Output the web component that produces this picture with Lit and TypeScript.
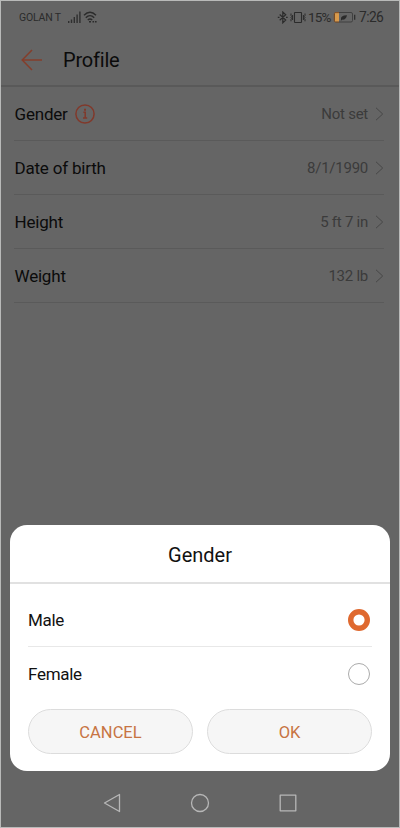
import { LitElement, html, svg, css } from "lit";
import { customElement, property, state } from "lit/decorators.js";

@customElement("status-bar")
class StatusBar extends LitElement {
  static styles = css`
    :host {
      display: flex;
      align-items: center;
      height: 31px;
      box-sizing: border-box;
      padding: 1px 15px 0 18px;
      color: #2b2b2b;
    }
    svg { display: block; flex: none; }
    .carrier { font-size: 10.5px; letter-spacing: -0.2px; width: 49px; white-space: nowrap; }
    .wifi { margin-left: 2px; }
    .right { display: flex; align-items: center; margin-left: auto; }
    .vibrate { margin-left: 1px; }
    .percent { font-size: 13.5px; width: 24px; margin-left: 1px; white-space: nowrap; letter-spacing: -0.8px; }
    .battery { margin-left: 1px; }
    .time { width: 25px; margin-left: 3px; font-size: 13.8px; letter-spacing: -0.6px; white-space: nowrap; }
  `;
  render() {
    return html`
      <span class="carrier">GOLAN T</span>
      <svg width="13" height="12" viewBox="0 0 13 12" fill="#2f2f2f">
        <path d="M0 10h1.4v2H0zM2.8 8.5h1.4V12H2.8zM5.6 6h1.4v6H5.6zM8.4 3.5h1.4V12H8.4zM11.2 .5h1.4V12h-1.4z" />
      </svg>
      <svg class="wifi" width="15" height="12" viewBox="0 0 15 12" fill="none" stroke="#2b2b2b" stroke-width="1.4">
        <path d="M1 4.3Q7 -1.8 13 4.3M2.8 6.8Q7 2.4 11.2 6.8M4.8 9Q7 6.8 9.2 9" />
        <path d="M6 10.8h2M9.5 10.8h1.6M12 10.8h1.6" stroke-width="1.5" />
      </svg>
      <div class="right">
        <svg width="12" height="13" viewBox="0 0 12 13" fill="none" stroke="#2b2b2b" stroke-width="1.2">
          <path d="M2.7 3.5L8.7 9L5.8 11.8V1L8.7 3.8L2.7 9.2M0.8 6.3h1.7M9 6.3h1.7" />
        </svg>
        <svg class="vibrate" width="17" height="13" viewBox="0 0 17 13" fill="none" stroke="#2b2b2b" stroke-width="1.1">
          <rect x="4.5" y="1.5" width="7" height="10" rx="0.5" />
          <path d="M2.6 4v5M1 2.5v2l.7 1-.7 1 .7 1-.7 1v1.8M13.4 4v5M15 2.5v2l-.7 1 .7 1-.7 1 .7 1v1.8" stroke-width="1" />
        </svg>
        <span class="percent">15%</span>
        <svg class="battery" width="23" height="13" viewBox="0 0 23 13" fill="none">
          <rect x="1.5" y="1.5" width="18" height="9.5" rx="1.5" stroke="#404040" />
          <path d="M6 1.5H3Q1.2 1.5 1.2 3.5v5.7Q1.2 11 3 11h3" stroke="#8b5424" />
          <rect x="2" y="2.2" width="4" height="8.2" fill="#d99a4b" />
          <path d="M8 8.8Q7 4.2 14 4.2Q13 9 9.2 8.6L7.8 10z" fill="#2b2b2b" />
          <path d="M21.7 3.8v5" stroke="#2b2b2b" stroke-width="1.2" />
        </svg>
        <span class="time">7:26</span>
      </div>
    `;
  }
}

@customElement("profile-row")
class ProfileRow extends LitElement {
  @property() label = "";
  @property() value = "";
  @property({ type: Boolean }) info = false;
  static styles = css`
    :host {
      display: flex;
      align-items: center;
      box-sizing: border-box;
      height: 54px;
      margin: 0 15px 0 13px;
      padding-left: 0.5px;
      border-bottom: 1px solid #5a5a5a;
    }
    .label { font-size: 17px; color: #0b0b0b; letter-spacing: -0.2px; padding-top: 1px; }
    .value { margin-left: auto; font-size: 15px; letter-spacing: -0.25px; color: #3b3b3b; padding-top: 1px; }
    svg { display: block; flex: none; }
    .info { margin-left: 7.5px; }
    .chevron { margin-left: 7px; }
  `;
  render() {
    return html`
      <span class="label">${this.label}</span>
      ${this.info
        ? html`<svg class="info" width="20" height="20" viewBox="0 0 20 20" fill="none" stroke="#81392b">
            <circle cx="10" cy="10" r="9.1" stroke-width="1.5" />
            <path d="M8.4 8.3h1.8v5.4M8 14h4.2" stroke-width="1.5" />
            <path d="M10 4.8v2" stroke-width="2" />
          </svg>`
        : null}
      <span class="value">${this.value}</span>
      <svg class="chevron" width="9" height="14" viewBox="0 0 9 14" fill="none" stroke="#474747">
        <path d="M1 .8L7.7 7L1 13.2" />
      </svg>
    `;
  }
}

@customElement("gender-dialog")
class GenderDialog extends LitElement {
  @state() selected = "Male";
  static styles = css`
    :host {
      display: block;
      box-sizing: border-box;
      height: 246px;
      border-radius: 17px;
      overflow: hidden;
      background: #fff;
      color: #111;
    }
    .title {
      display: flex;
      align-items: center;
      justify-content: center;
      box-sizing: border-box;
      height: 59px;
      padding-top: 2px;
      border-bottom: 2px solid #e1e1e1;
      font-size: 20px;
    }
    .options { padding: 9px 18px 0; }
    .option {
      display: flex;
      align-items: center;
      justify-content: space-between;
      box-sizing: border-box;
      height: 54px;
      padding-right: 2px;
      font-size: 17px;
      letter-spacing: -0.3px;
    }
    .option:first-child { border-bottom: 1px solid #e8e8e8; }
    svg { display: block; }
    .actions { display: flex; gap: 14px; padding: 8px 18px 0; }
    button {
      flex: 1;
      height: 45px;
      box-sizing: border-box;
      padding: 1px 0 0;
      border: 1px solid #dcdcdc;
      border-radius: 23px;
      background: #f6f6f6;
      color: #c77443;
      font: 16.5px Roboto, sans-serif;
    }
  `;
  render() {
    return html`
      <div class="title">Gender</div>
      <div class="options">
        ${["Male", "Female"].map(
          (name) => html`<div class="option" @click=${() => (this.selected = name)}>
            <span>${name}</span>
            <svg width="22" height="22" viewBox="0 0 22 22" fill="none">
              ${this.selected === name
                ? svg`<circle cx="11" cy="11" r="8.3" stroke="#df692f" stroke-width="5.4" />`
                : svg`<circle cx="11" cy="11" r="10.5" stroke="#aaa" />`}
            </svg>
          </div>`
        )}
      </div>
      <div class="actions"><button>CANCEL</button><button>OK</button></div>
    `;
  }
}

@customElement("app-root")
class AppRoot extends LitElement {
  static styles = css`
    :host {
      display: flex;
      flex-direction: column;
      box-sizing: border-box;
      height: 828px;
      border: 1px solid #b9bab9;
      background: #656565;
      font-family: Roboto, sans-serif;
    }
    header {
      display: flex;
      align-items: center;
      box-sizing: border-box;
      height: 55px;
      padding: 2px 20px 0;
      border-bottom: 2px solid #595959;
      color: #0b0b0b;
      font-size: 20px;
      letter-spacing: -0.2px;
    }
    header svg { display: block; margin-right: 20px; }
    .sheet { margin: auto 9px 0; }
    nav {
      display: flex;
      justify-content: center;
      align-items: center;
      gap: 68.3px;
      box-sizing: border-box;
      height: 56px;
      padding-top: 8px;
    }
    nav svg { display: block; }
  `;
  render() {
    return html`
      <status-bar></status-bar>
      <header>
        <svg width="22" height="22" viewBox="0 0 22 22" fill="none" stroke="#843e2b" stroke-width="1.5">
          <path d="M21 11H1.5M11 1L1.2 11L11 21" />
        </svg>
        <span>Profile</span>
      </header>
      <profile-row label="Gender" value="Not set" info></profile-row>
      <profile-row label="Date of birth" value="8/1/1990"></profile-row>
      <profile-row label="Height" value="5 ft 7 in"></profile-row>
      <profile-row label="Weight" value="132 lb"></profile-row>
      <gender-dialog class="sheet"></gender-dialog>
      <nav>
        ${[
          svg`<path d="M17.5 1.5v17L2.5 10z" />`,
          svg`<circle cx="10" cy="10" r="8.5" />`,
          svg`<rect x="2.2" y="2.2" width="15.6" height="15.6" />`,
        ].map(
          (shape) => html`<svg width="20" height="20" viewBox="0 0 20 20" fill="none" stroke="#b7b7b7" stroke-width="1.3" stroke-linejoin="round">${shape}</svg>`
        )}
      </nav>
    `;
  }
}
